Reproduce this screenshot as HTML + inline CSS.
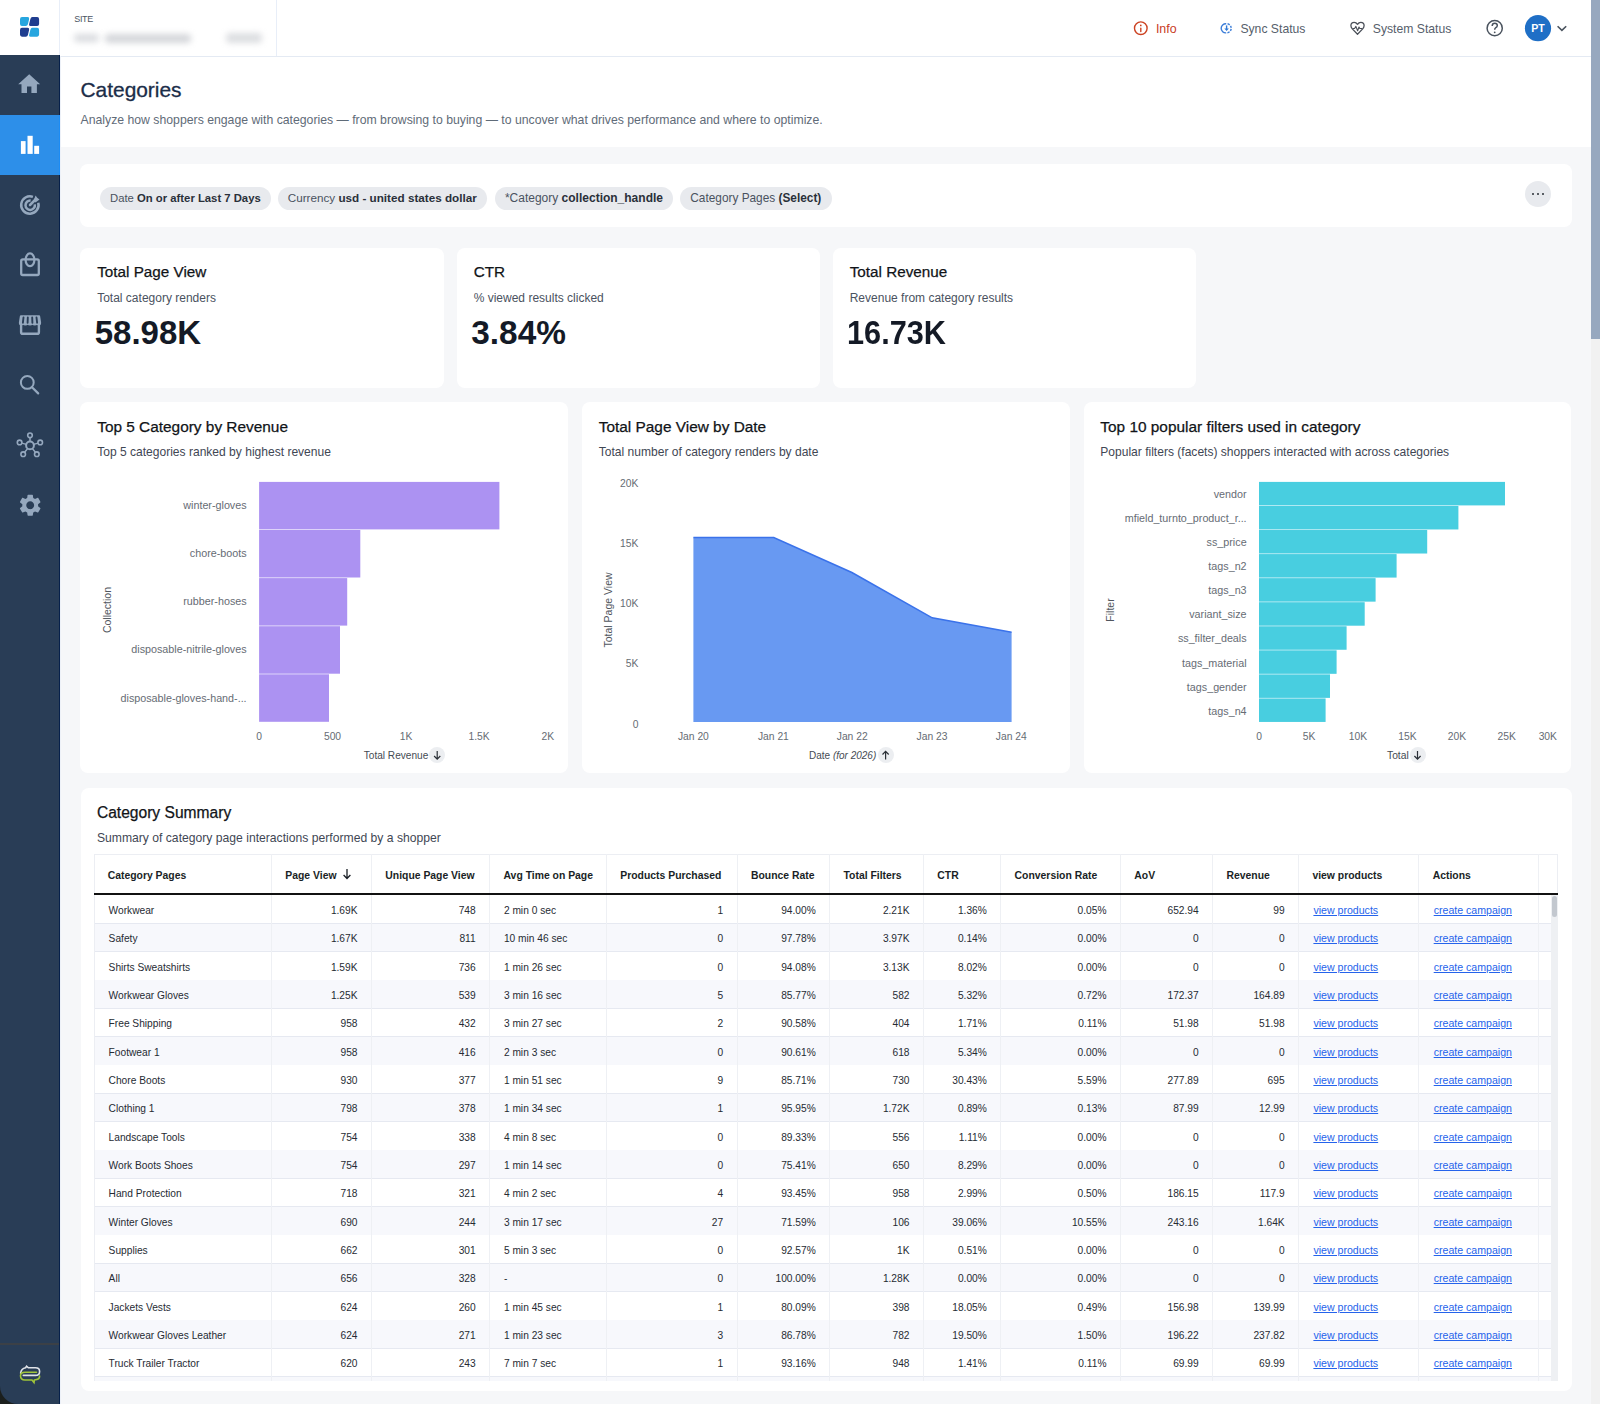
<!DOCTYPE html>
<html><head><meta charset="utf-8"><title>Categories</title>
<style>
*{box-sizing:border-box;margin:0;padding:0}
html,body{width:1600px;height:1404px;overflow:hidden}
body{font-family:"Liberation Sans",sans-serif;background:#f6f7f9;position:relative;color:#1f2937}
.abs{position:absolute}
.card{position:absolute;background:#fff;border-radius:8px}
.t{position:absolute;white-space:nowrap;line-height:1}
svg{position:absolute;overflow:visible}
</style></head><body>

<div class="abs" style="left:0px;top:0px;width:1591px;height:147px;background:#fff;"></div>
<div class="abs" style="left:60px;top:56px;width:1531px;height:1px;background:#e4eaf3;"></div>
<div class="abs" style="left:59px;top:0px;width:1px;height:56px;background:#e8eef8;"></div>
<div class="abs" style="left:276px;top:0px;width:1px;height:56px;background:#e8eef8;"></div>
<div class="t" style="left:74.3px;top:15px;font-size:9px;color:#4b5563;letter-spacing:-0.35px">SITE</div>
<div class="abs" style="left:74px;top:34px;width:25px;height:8px;background:#d9dbdf;border-radius:4px;filter:blur(3px)"></div>
<div class="abs" style="left:105px;top:33.5px;width:86px;height:9px;background:#d4d6da;border-radius:4px;filter:blur(3.2px)"></div>
<div class="abs" style="left:226px;top:33px;width:36px;height:10px;background:#dcdee1;border-radius:4px;filter:blur(3.2px)"></div>
<svg style="left:20.1px;top:17.2px" width="20" height="20" viewBox="0 0 20 20" transform="scale(1,1.04)">
<path d="M2 0.5H7.6Q9.6 0.5 9.1 2.5L7.9 7.3Q7.5 9 5.8 9H2Q0 9 0 7V2.5Q0 0.5 2 0.5Z" fill="#27a6df"/>
<path d="M12.4 0.5H17.2Q19.1 0.5 19.1 2.5V7Q19.1 9 17.1 9H10.4Q8.6 9 9.1 7.3L10.3 2.5Q10.8 0.5 12.4 0.5Z" fill="#1f3d8f"/>
<path d="M2 10.8H7.6Q9.6 10.8 9.1 12.8L7.9 17.6Q7.5 19.3 5.8 19.3H2Q0 19.3 0 17.3V12.8Q0 10.8 2 10.8Z" fill="#1f3d8f"/>
<path d="M12.4 10.8H17.2Q19.1 10.8 19.1 12.8V17.3Q19.1 19.3 17.1 19.3H10.4Q8.6 19.3 9.1 17.6L10.3 12.8Q10.8 10.8 12.4 10.8Z" fill="#27a6df"/>
</svg>
<div class="abs" style="left:0px;top:1370px;width:30px;height:34px;background:#1b1f1d;"></div>
<div class="abs" style="left:0px;top:55px;width:60px;height:1349px;background:#293d56;border-bottom-left-radius:18px"></div>
<div class="abs" style="left:59px;top:55px;width:1px;height:1349px;background:#06204a;"></div>
<div class="abs" style="left:0px;top:115px;width:60px;height:60px;background:#2d8fe9;"></div>
<div class="abs" style="left:59px;top:115px;width:1px;height:60px;background:#1c8cf5;"></div>
<div class="abs" style="left:60px;top:56px;width:1px;height:1348px;background:#edf1f8;"></div>
<div class="abs" style="left:0px;top:1343px;width:59px;height:2px;background:#3b4046;"></div>
<svg style="left:16.2px;top:71.3px" width="26.4" height="26.4" viewBox="0 0 24 24"><path d="M10 20v-6h4v6h5v-8h3L12 3 2 12h3v8z" fill="#95a8be"/></svg>
<svg style="left:0;top:0" width="60" height="200"><rect x="20.9" y="141.1" width="4.7" height="12.8" fill="#fff"/><rect x="27.5" y="135.8" width="5.2" height="18.1" fill="#fff"/><rect x="34.2" y="145.8" width="4.9" height="8.1" fill="#fff"/></svg>
<svg style="left:0;top:0" width="60" height="600">
<path d="M38.3 202.75 A8.7 8.7 0 1 1 32.9 196.8" fill="none" stroke="#95a8be" stroke-width="2.5"/>
<path d="M34.83 204.38 A4.7 4.7 0 1 1 30.61 200.52" fill="none" stroke="#95a8be" stroke-width="2.5"/>
<line x1="30" y1="205" x2="36" y2="199" stroke="#95a8be" stroke-width="2.5" stroke-linecap="round"/>
<path d="M33.6 200.6 L35.6 195.5 L37.2 197.7 L39.5 199.4 L35.5 202.5Z" fill="#95a8be"/>
</svg>
<svg style="left:0;top:0" width="60" height="600">
<rect x="21.2" y="259.4" width="17.6" height="15.6" rx="1.6" fill="none" stroke="#95a8be" stroke-width="2.3"/>
<ellipse cx="30" cy="259.8" rx="4.4" ry="6.4" fill="none" stroke="#95a8be" stroke-width="2.2"/>
</svg>
<svg style="left:0;top:0" width="60" height="600">
<rect x="21.1" y="323.6" width="17.8" height="10.2" rx="1.6" fill="none" stroke="#95a8be" stroke-width="2.4"/>
<path d="M20.8 315.3 H39.2 Q39.9 315.3 40.1 316 L41.1 322.3 Q41.3 325.6 39 325.6 Q37.4 325.6 37.1 324.2 Q36.7 325.6 34.8 325.6 Q32.8 325.6 32.4 324.2 Q32 325.6 30 325.6 Q28 325.6 27.7 324.2 Q27.3 325.6 25.3 325.6 Q23.4 325.6 23 324.2 Q22.6 325.6 21 325.6 Q18.7 325.6 18.9 322.3 L19.9 316 Q20.1 315.3 20.8 315.3Z" fill="#95a8be"/>
<path d="M23.5 317.5 L22.9 322.7 M27.8 317.5 L27.6 322.7 M32.2 317.5 L32.4 322.7 M36.5 317.5 L37.1 322.7" stroke="#293d56" stroke-width="1.9" stroke-linecap="round"/>
</svg>
<svg style="left:0;top:0" width="60" height="600">
<circle cx="27.3" cy="382.4" r="6.4" fill="none" stroke="#95a8be" stroke-width="2"/>
<line x1="32" y1="387.2" x2="38.2" y2="393.4" stroke="#95a8be" stroke-width="2.2" stroke-linecap="round"/>
</svg>
<svg style="left:0;top:0" width="60" height="600" fill="none" stroke="#95a8be">
<circle cx="30" cy="445.4" r="3.9" stroke-width="2"/>
<circle cx="30" cy="435.3" r="2.3" stroke-width="1.6"/>
<circle cx="19.6" cy="442.4" r="2.3" stroke-width="1.6"/>
<circle cx="40.2" cy="442.4" r="2.3" stroke-width="1.6"/>
<circle cx="23.2" cy="454.2" r="2.3" stroke-width="1.6"/>
<circle cx="36.8" cy="454.2" r="2.3" stroke-width="1.6"/>
<path d="M30 437.6V441.5 M21.9 443.1L26.2 444.4 M37.9 443.1L33.8 444.4 M24.6 452.3L27.6 448.6 M35.4 452.3L32.4 448.6" stroke-width="1.5"/>
</svg>
<svg style="left:16.8px;top:492px" width="26.4" height="26.4" viewBox="0 0 24 24"><path fill="#95a8be" d="M19.14 12.94c.04-.3.06-.61.06-.94 0-.32-.02-.64-.07-.94l2.03-1.58c.18-.14.23-.41.12-.61l-1.92-3.32c-.12-.22-.37-.29-.59-.22l-2.39.96c-.5-.38-1.03-.7-1.62-.94l-.36-2.54c-.04-.24-.24-.41-.48-.41h-3.84c-.24 0-.43.17-.47.41l-.36 2.54c-.59.24-1.130.57-1.62.94l-2.39-.96c-.22-.08-.47 0-.59.22L2.74 8.87c-.12.21-.08.47.12.61l2.03 1.58c-.05.3-.09.63-.09.94s.02.64.07.94l-2.03 1.58c-.18.14-.23.41-.12.61l1.92 3.32c.12.22.37.29.59.22l2.39-.96c.5.38 1.03.7 1.62.94l.36 2.54c.05.24.24.41.48.41h3.84c.24 0 .44-.17.47-.41l.36-2.54c.59-.24 1.13-.56 1.62-.94l2.39.96c.22.08.47 0 .59-.22l1.92-3.32c.12-.22.07-.47-.12-.61l-2.01-1.58zM12 15.6c-1.98 0-3.6-1.620-3.6-3.6s1.62-3.6 3.6-3.6 3.6 1.62 3.6 3.6-1.62 3.6-3.6 3.6z"/></svg>
<svg style="left:0;top:0" width="60" height="1404" fill="none" stroke-width="1.6" stroke-linecap="round">
<path d="M20.6 1373.2 Q21.2 1368.6 25.6 1367.8 L26.6 1366.3 L28.4 1367.8 H35.5 Q39.6 1367.8 39.6 1371.4 Q39.6 1375.4 35.5 1375.4 H23.3" stroke="#dfe3e8"/>
<path d="M36.5 1372.2 H25 Q20.5 1372.2 20.5 1375.8 Q20.5 1380 25 1380 H32 L34 1382.6 L34.4 1380 Q39.8 1379.6 39.6 1376" stroke="#9fc43a"/>
</svg>
<svg style="left:0;top:0" width="1600" height="60" fill="none">
<circle cx="1140.8" cy="28.2" r="6.3" stroke="#cc4222" stroke-width="1.4"/>
<line x1="1140.8" y1="28.1" x2="1140.8" y2="31.6" stroke="#cc4222" stroke-width="1.4" stroke-linecap="round"/>
<circle cx="1140.8" cy="25.4" r="0.85" fill="#cc4222"/>
<path d="M1226.20 23.72 A4.6 4.6 0 1 0 1226.20 32.88 M1227.56 23.80 A4.6 4.6 0 0 1 1229.68 24.88 M1230.50 25.86 A4.6 4.6 0 0 1 1231.17 27.82 M1231.16 28.94 A4.6 4.6 0 0 1 1230.41 30.87 M1229.56 31.82 A4.6 4.6 0 0 1 1227.40 32.83" stroke="#3b7dd8" stroke-width="1.4"/>
<path d="M1226.6 25.4 V29.2" stroke="#2f78d6" stroke-width="1.4"/>
<path d="M1224.3 28.4 H1228.9 L1226.6 31.1Z" fill="#2f78d6"/>
<path d="M1357.5 34.2 L1352.3 28.9 Q1350.9 27.4 1350.9 25.6 Q1350.9 22.3 1354.2 22.3 Q1356.2 22.3 1357.5 24.3 Q1358.8 22.3 1360.8 22.3 Q1364.1 22.3 1364.1 25.6 Q1364.1 27.4 1362.7 28.9 Z" stroke="#4b5059" stroke-width="1.3" stroke-linejoin="round"/>
<path d="M1352.4 28.5 H1354.6 L1355.9 26.4 L1357.6 30.8 L1359 27 L1359.8 28.5 H1362.6" stroke="#4b5059" stroke-width="1.1" stroke-linejoin="round"/>
<circle cx="1494.7" cy="28.2" r="7.6" stroke="#4a535e" stroke-width="1.5"/>
<path d="M1492.2 25.9 Q1492.2 23.2 1494.8 23.2 Q1497.3 23.2 1497.3 25.5 Q1497.3 27 1495.6 27.8 Q1494.7 28.3 1494.7 29.8" stroke="#4a535e" stroke-width="1.5"/>
<circle cx="1494.7" cy="32.3" r="0.9" fill="#4a535e"/>
<circle cx="1538" cy="28.2" r="13.1" fill="#1f6fc6"/>
<path d="M1557.6 26.2 L1561.9 30.4 L1566.2 26.2" stroke="#4a535e" stroke-width="1.6"/>
</svg>
<div class="t" style="left:1155.9px;top:23px;font-size:12.4px;color:#c9401f;">Info</div>
<div class="t" style="left:1240.4px;top:23px;font-size:12.2px;color:#56606b;">Sync Status</div>
<div class="t" style="left:1372.8px;top:23px;font-size:12.2px;color:#56606b;">System Status</div>
<div class="t" style="left:1538px;transform:translateX(-50%);top:23px;font-size:10.6px;font-weight:700;color:#ffffff;">PT</div>
<div class="t" style="left:80.5px;top:80px;font-size:20.9px;color:#1b2d48;-webkit-text-stroke:0.3px #1b2d48">Categories</div>
<div class="t" style="left:80.5px;top:114px;font-size:12.25px;color:#5f6b78;">Analyze how shoppers engage with categories — from browsing to buying — to uncover what drives performance and where to optimize.</div>
<div class="abs" style="left:1591px;top:0px;width:9px;height:1404px;background:#f1f1f1;"></div>
<div class="abs" style="left:1591px;top:0px;width:9px;height:339px;background:#97a8bf;"></div>
<div class="card" style="left:80px;top:163.5px;width:1492px;height:63.5px"></div>
<div class="abs" style="left:100px;top:186.8px;width:170.75px;height:23.4px;border-radius:12px;background:#e8eaee"></div>
<div class="t" style="left:100px;width:170.75px;top:193px;font-size:11.3px;color:#4a5260;text-align:center">Date <b style="color:#2a303a">On or after Last 7 Days</b></div>
<div class="abs" style="left:277.5px;top:186.8px;width:209.5px;height:23.4px;border-radius:12px;background:#e8eaee"></div>
<div class="t" style="left:277.5px;width:209.5px;top:192px;font-size:11.7px;color:#4a5260;text-align:center">Currency <b style="color:#2a303a">usd - united states dollar</b></div>
<div class="abs" style="left:494.5px;top:186.8px;width:178.9px;height:23.4px;border-radius:12px;background:#e8eaee"></div>
<div class="t" style="left:494.5px;width:178.9px;top:192px;font-size:12px;color:#4a5260;text-align:center">*Category <b style="color:#2a303a">collection_handle</b></div>
<div class="abs" style="left:680px;top:186.8px;width:151.6px;height:23.4px;border-radius:12px;background:#e8eaee"></div>
<div class="t" style="left:680px;width:151.6px;top:193px;font-size:11.85px;color:#4a5260;text-align:center">Category Pages <b style="color:#2a303a">(Select)</b></div>
<div class="abs" style="left:1525px;top:180.8px;width:26px;height:26px;border-radius:13px;background:#e8eaee"></div>
<div class="abs" style="left:1531.8px;top:192.6px;width:2.4px;height:2.4px;border-radius:1.2px;background:#2a2f36"></div>
<div class="abs" style="left:1536.8px;top:192.6px;width:2.4px;height:2.4px;border-radius:1.2px;background:#2a2f36"></div>
<div class="abs" style="left:1541.8px;top:192.6px;width:2.4px;height:2.4px;border-radius:1.2px;background:#2a2f36"></div>
<div class="card" style="left:80px;top:248px;width:363.5px;height:140px"></div>
<div class="t" style="left:97.2px;top:264px;font-size:15.25px;color:#111418;-webkit-text-stroke:0.25px #111418">Total Page View</div>
<div class="t" style="left:97.2px;top:292px;font-size:12px;color:#4a5260;">Total category renders</div>
<div class="t" style="left:94.75px;top:316px;font-size:33px;font-weight:700;color:#141a26;">58.98K</div>
<div class="card" style="left:456.5px;top:248px;width:363.5px;height:140px"></div>
<div class="t" style="left:473.7px;top:264px;font-size:15.25px;color:#111418;-webkit-text-stroke:0.25px #111418">CTR</div>
<div class="t" style="left:473.7px;top:292px;font-size:12px;color:#4a5260;">% viewed results clicked</div>
<div class="t" style="left:471.25px;top:316px;font-size:33.4px;font-weight:700;color:#141a26;">3.84%</div>
<div class="card" style="left:832.5px;top:248px;width:363.5px;height:140px"></div>
<div class="t" style="left:849.7px;top:264px;font-size:15.25px;color:#111418;-webkit-text-stroke:0.25px #111418">Total Revenue</div>
<div class="t" style="left:849.7px;top:292px;font-size:12px;color:#4a5260;">Revenue from category results</div>
<div class="t" style="left:846.9px;top:316px;font-size:33px;font-weight:700;color:#141a26;transform:scaleX(0.93);transform-origin:0 0">16.73K</div>
<div class="card" style="left:80px;top:401.5px;width:488px;height:371.9px"></div>
<div class="card" style="left:581.6px;top:401.5px;width:488.1px;height:371.9px"></div>
<div class="card" style="left:1083.8px;top:401.5px;width:487.5px;height:371.9px"></div>
<div class="t" style="left:97.2px;top:419px;font-size:15.4px;color:#111418;-webkit-text-stroke:0.25px #111418">Top 5 Category by Revenue</div>
<div class="t" style="left:97.2px;top:446px;font-size:12.05px;color:#3f4754;">Top 5 categories ranked by highest revenue</div>
<div class="t" style="left:598.75px;top:419px;font-size:15.4px;color:#111418;-webkit-text-stroke:0.25px #111418">Total Page View by Date</div>
<div class="t" style="left:598.75px;top:446px;font-size:12.05px;color:#3f4754;">Total number of category renders by date</div>
<div class="t" style="left:1100.3px;top:419px;font-size:15.4px;color:#111418;-webkit-text-stroke:0.25px #111418">Top 10 popular filters used in category</div>
<div class="t" style="left:1100.3px;top:446px;font-size:12.05px;color:#3f4754;">Popular filters (facets) shoppers interacted with across categories</div>
<svg style="left:0;top:0" width="1600" height="800">
<rect x="259.1" y="481.9" width="240.3" height="47.5" fill="#ac92f2"/>
<rect x="259.1" y="530" width="101.2" height="47.5" fill="#ac92f2"/>
<rect x="259.1" y="578.1" width="88.1" height="47.5" fill="#ac92f2"/>
<rect x="259.1" y="626.2" width="80.9" height="47.5" fill="#ac92f2"/>
<rect x="259.1" y="674.3" width="69.9" height="47.5" fill="#ac92f2"/>
<rect x="1259" y="481.9" width="246" height="23.5" fill="#48cee0"/>
<rect x="1259" y="505.96" width="199.4" height="23.5" fill="#48cee0"/>
<rect x="1259" y="530.02" width="168.2" height="23.5" fill="#48cee0"/>
<rect x="1259" y="554.08" width="137.6" height="23.5" fill="#48cee0"/>
<rect x="1259" y="578.14" width="116.6" height="23.5" fill="#48cee0"/>
<rect x="1259" y="602.2" width="105.7" height="23.5" fill="#48cee0"/>
<rect x="1259" y="626.26" width="87.6" height="23.5" fill="#48cee0"/>
<rect x="1259" y="650.32" width="77.6" height="23.5" fill="#48cee0"/>
<rect x="1259" y="674.38" width="71" height="23.5" fill="#48cee0"/>
<rect x="1259" y="698.44" width="66.6" height="23.5" fill="#48cee0"/>
<path d="M693.4 722 L693.4 537.5 L773.75 537.5 L851.9 572.5 L932.2 617.8 L1011.6 632.2 L1011.6 722Z" fill="#6899f2"/>
<polyline points="693.4,537.5 773.75,537.5 851.9,572.5 932.2,617.8 1011.6,632.2" fill="none" stroke="#3a72ea" stroke-width="1.5"/>
</svg>
<div class="t" style="right:1353.4px;top:500px;font-size:10.75px;color:#666c74;">winter-gloves</div>
<div class="t" style="right:1353.4px;top:548px;font-size:10.75px;color:#666c74;">chore-boots</div>
<div class="t" style="right:1353.4px;top:596px;font-size:10.75px;color:#666c74;">rubber-hoses</div>
<div class="t" style="right:1353.4px;top:644px;font-size:10.75px;color:#666c74;">disposable-nitrile-gloves</div>
<div class="t" style="right:1353.4px;top:693px;font-size:10.75px;color:#666c74;">disposable-gloves-hand-...</div>
<div class="t" style="right:353.4px;top:489px;font-size:10.75px;color:#666c74;">vendor</div>
<div class="t" style="right:353.4px;top:513px;font-size:10.75px;color:#666c74;">mfield_turnto_product_r...</div>
<div class="t" style="right:353.4px;top:537px;font-size:10.75px;color:#666c74;">ss_price</div>
<div class="t" style="right:353.4px;top:561px;font-size:10.75px;color:#666c74;">tags_n2</div>
<div class="t" style="right:353.4px;top:585px;font-size:10.75px;color:#666c74;">tags_n3</div>
<div class="t" style="right:353.4px;top:609px;font-size:10.75px;color:#666c74;">variant_size</div>
<div class="t" style="right:353.4px;top:633px;font-size:10.75px;color:#666c74;">ss_filter_deals</div>
<div class="t" style="right:353.4px;top:658px;font-size:10.75px;color:#666c74;">tags_material</div>
<div class="t" style="right:353.4px;top:682px;font-size:10.75px;color:#666c74;">tags_gender</div>
<div class="t" style="right:353.4px;top:706px;font-size:10.75px;color:#666c74;">tags_n4</div>
<div class="t" style="left:259.1px;transform:translateX(-50%);top:732px;font-size:10.3px;color:#666c74;">0</div>
<div class="t" style="left:332.5px;transform:translateX(-50%);top:732px;font-size:10.3px;color:#666c74;">500</div>
<div class="t" style="left:406px;transform:translateX(-50%);top:732px;font-size:10.3px;color:#666c74;">1K</div>
<div class="t" style="left:479px;transform:translateX(-50%);top:732px;font-size:10.3px;color:#666c74;">1.5K</div>
<div class="t" style="left:547.8px;transform:translateX(-50%);top:732px;font-size:10.3px;color:#666c74;">2K</div>
<div class="t" style="left:1259px;transform:translateX(-50%);top:732px;font-size:10.3px;color:#666c74;">0</div>
<div class="t" style="left:1309px;transform:translateX(-50%);top:732px;font-size:10.3px;color:#666c74;">5K</div>
<div class="t" style="left:1358px;transform:translateX(-50%);top:732px;font-size:10.3px;color:#666c74;">10K</div>
<div class="t" style="left:1407.5px;transform:translateX(-50%);top:732px;font-size:10.3px;color:#666c74;">15K</div>
<div class="t" style="left:1457px;transform:translateX(-50%);top:732px;font-size:10.3px;color:#666c74;">20K</div>
<div class="t" style="left:1506.6px;transform:translateX(-50%);top:732px;font-size:10.3px;color:#666c74;">25K</div>
<div class="t" style="left:1547.8px;transform:translateX(-50%);top:732px;font-size:10.3px;color:#666c74;">30K</div>
<div class="t" style="left:693.4px;transform:translateX(-50%);top:732px;font-size:10.3px;color:#666c74;">Jan 20</div>
<div class="t" style="left:773.4px;transform:translateX(-50%);top:732px;font-size:10.3px;color:#666c74;">Jan 21</div>
<div class="t" style="left:852.2px;transform:translateX(-50%);top:732px;font-size:10.3px;color:#666c74;">Jan 22</div>
<div class="t" style="left:932px;transform:translateX(-50%);top:732px;font-size:10.3px;color:#666c74;">Jan 23</div>
<div class="t" style="left:1011.3px;transform:translateX(-50%);top:732px;font-size:10.3px;color:#666c74;">Jan 24</div>
<div class="t" style="right:961.6px;top:479px;font-size:10.3px;color:#666c74;">20K</div>
<div class="t" style="right:961.6px;top:539px;font-size:10.3px;color:#666c74;">15K</div>
<div class="t" style="right:961.6px;top:599px;font-size:10.3px;color:#666c74;">10K</div>
<div class="t" style="right:961.6px;top:659px;font-size:10.3px;color:#666c74;">5K</div>
<div class="t" style="right:961.6px;top:720px;font-size:10.3px;color:#666c74;">0</div>
<div class="abs" style="left:429.2px;top:747.3px;width:16px;height:16px;border-radius:8px;background:#eceef1"></div>
<svg style="left:0;top:0" width="1600" height="800"><path d="M437.2 751 V759 M434.1 756 L437.2 759.2 L440.3 756" fill="none" stroke="#2a2f36" stroke-width="1.2"/></svg>
<div class="abs" style="left:877.6px;top:747.3px;width:16px;height:16px;border-radius:8px;background:#eceef1"></div>
<svg style="left:0;top:0" width="1600" height="800"><path d="M885.6 759.5 V751.5 M882.5 754.5 L885.6 751.3 L888.7 754.5" fill="none" stroke="#2a2f36" stroke-width="1.2"/></svg>
<div class="abs" style="left:1409.5px;top:747.3px;width:16px;height:16px;border-radius:8px;background:#eceef1"></div>
<svg style="left:0;top:0" width="1600" height="800"><path d="M1417.5 751 V759 M1414.4 756 L1417.5 759.2 L1420.6 756" fill="none" stroke="#2a2f36" stroke-width="1.2"/></svg>
<div class="t" style="left:363.75px;top:751px;font-size:10.1px;color:#454b53;">Total Revenue</div>
<div class="t" style="left:809px;top:751px;font-size:10px;color:#454b53;">Date <i>(for 2026)</i></div>
<div class="t" style="left:1387px;top:751px;font-size:10.3px;color:#454b53;">Total</div>
<div class="t" style="left:106.6px;top:610px;font-size:10.5px;color:#50565e;transform:translate(-50%,-50%) rotate(-90deg)">Collection</div>
<div class="t" style="left:608px;top:610px;font-size:10.5px;color:#50565e;transform:translate(-50%,-50%) rotate(-90deg)">Total Page View</div>
<div class="t" style="left:1109.7px;top:610px;font-size:10.5px;color:#50565e;transform:translate(-50%,-50%) rotate(-90deg)">Filter</div>
<div class="card" style="left:80.5px;top:787.5px;width:1491.5px;height:603px"></div>
<div class="t" style="left:96.9px;top:805px;font-size:15.6px;color:#111418;-webkit-text-stroke:0.25px #111418">Category Summary</div>
<div class="t" style="left:96.9px;top:832px;font-size:12.16px;color:#3f4754;">Summary of category page interactions performed by a shopper</div>
<div class="abs" style="left:93.5px;top:854px;width:1464.3px;height:527.2px;background:#fff;border:1px solid #eceef3;border-bottom:none"></div>
<div class="abs" style="left:94.5px;top:895.2px;width:1456.5px;height:28.34px;background:#fff;"></div>
<div class="abs" style="left:94.5px;top:922.94px;width:1456.5px;height:1px;background:#e6e9f1;"></div>
<div class="abs" style="left:94.5px;top:923.54px;width:1456.5px;height:28.34px;background:#f7f8fc;"></div>
<div class="abs" style="left:94.5px;top:951.28px;width:1456.5px;height:1px;background:#e6e9f1;"></div>
<div class="abs" style="left:94.5px;top:951.88px;width:1456.5px;height:28.34px;background:#fff;"></div>
<div class="abs" style="left:94.5px;top:979.62px;width:1456.5px;height:1px;background:#e6e9f1;"></div>
<div class="abs" style="left:94.5px;top:980.22px;width:1456.5px;height:28.34px;background:#f7f8fc;"></div>
<div class="abs" style="left:94.5px;top:1007.96px;width:1456.5px;height:1px;background:#e6e9f1;"></div>
<div class="abs" style="left:94.5px;top:1008.56px;width:1456.5px;height:28.34px;background:#fff;"></div>
<div class="abs" style="left:94.5px;top:1036.3px;width:1456.5px;height:1px;background:#e6e9f1;"></div>
<div class="abs" style="left:94.5px;top:1036.9px;width:1456.5px;height:28.34px;background:#f7f8fc;"></div>
<div class="abs" style="left:94.5px;top:1064.64px;width:1456.5px;height:1px;background:#e6e9f1;"></div>
<div class="abs" style="left:94.5px;top:1065.24px;width:1456.5px;height:28.34px;background:#fff;"></div>
<div class="abs" style="left:94.5px;top:1092.98px;width:1456.5px;height:1px;background:#e6e9f1;"></div>
<div class="abs" style="left:94.5px;top:1093.58px;width:1456.5px;height:28.34px;background:#f7f8fc;"></div>
<div class="abs" style="left:94.5px;top:1121.32px;width:1456.5px;height:1px;background:#e6e9f1;"></div>
<div class="abs" style="left:94.5px;top:1121.92px;width:1456.5px;height:28.34px;background:#fff;"></div>
<div class="abs" style="left:94.5px;top:1149.66px;width:1456.5px;height:1px;background:#e6e9f1;"></div>
<div class="abs" style="left:94.5px;top:1150.26px;width:1456.5px;height:28.34px;background:#f7f8fc;"></div>
<div class="abs" style="left:94.5px;top:1178px;width:1456.5px;height:1px;background:#e6e9f1;"></div>
<div class="abs" style="left:94.5px;top:1178.6px;width:1456.5px;height:28.34px;background:#fff;"></div>
<div class="abs" style="left:94.5px;top:1206.34px;width:1456.5px;height:1px;background:#e6e9f1;"></div>
<div class="abs" style="left:94.5px;top:1206.94px;width:1456.5px;height:28.34px;background:#f7f8fc;"></div>
<div class="abs" style="left:94.5px;top:1234.68px;width:1456.5px;height:1px;background:#e6e9f1;"></div>
<div class="abs" style="left:94.5px;top:1235.28px;width:1456.5px;height:28.34px;background:#fff;"></div>
<div class="abs" style="left:94.5px;top:1263.02px;width:1456.5px;height:1px;background:#e6e9f1;"></div>
<div class="abs" style="left:94.5px;top:1263.62px;width:1456.5px;height:28.34px;background:#f7f8fc;"></div>
<div class="abs" style="left:94.5px;top:1291.36px;width:1456.5px;height:1px;background:#e6e9f1;"></div>
<div class="abs" style="left:94.5px;top:1291.96px;width:1456.5px;height:28.34px;background:#fff;"></div>
<div class="abs" style="left:94.5px;top:1319.7px;width:1456.5px;height:1px;background:#e6e9f1;"></div>
<div class="abs" style="left:94.5px;top:1320.3px;width:1456.5px;height:28.34px;background:#f7f8fc;"></div>
<div class="abs" style="left:94.5px;top:1348.04px;width:1456.5px;height:1px;background:#e6e9f1;"></div>
<div class="abs" style="left:94.5px;top:1348.64px;width:1456.5px;height:28.34px;background:#fff;"></div>
<div class="abs" style="left:94.5px;top:1376.38px;width:1456.5px;height:1px;background:#e6e9f1;"></div>
<div class="abs" style="left:94.5px;top:1376.98px;width:1456.5px;height:4.22px;background:#f7f8fc;"></div>
<div class="abs" style="left:94.5px;top:1404.72px;width:1456.5px;height:1px;background:#e6e9f1;"></div>
<div class="abs" style="left:270.8px;top:854px;width:1px;height:527.2px;background:#eef0f4;"></div>
<div class="abs" style="left:370.8px;top:854px;width:1px;height:527.2px;background:#eef0f4;"></div>
<div class="abs" style="left:489px;top:854px;width:1px;height:527.2px;background:#eef0f4;"></div>
<div class="abs" style="left:605.8px;top:854px;width:1px;height:527.2px;background:#eef0f4;"></div>
<div class="abs" style="left:736.5px;top:854px;width:1px;height:527.2px;background:#eef0f4;"></div>
<div class="abs" style="left:829px;top:854px;width:1px;height:527.2px;background:#eef0f4;"></div>
<div class="abs" style="left:922.8px;top:854px;width:1px;height:527.2px;background:#eef0f4;"></div>
<div class="abs" style="left:1000.1px;top:854px;width:1px;height:527.2px;background:#eef0f4;"></div>
<div class="abs" style="left:1119.8px;top:854px;width:1px;height:527.2px;background:#eef0f4;"></div>
<div class="abs" style="left:1212px;top:854px;width:1px;height:527.2px;background:#eef0f4;"></div>
<div class="abs" style="left:1297.9px;top:854px;width:1px;height:527.2px;background:#eef0f4;"></div>
<div class="abs" style="left:1418.2px;top:854px;width:1px;height:527.2px;background:#eef0f4;"></div>
<div class="abs" style="left:1537.9px;top:854px;width:1px;height:527.2px;background:#eef0f4;"></div>
<div class="abs" style="left:94px;top:893.2px;width:1463.8px;height:2px;background:#111;"></div>
<div class="t" style="left:107.7px;top:871px;font-size:10.4px;font-weight:700;color:#1a1f26;">Category Pages</div>
<div class="t" style="left:285.3px;top:871px;font-size:10.4px;font-weight:700;color:#1a1f26;">Page View</div>
<div class="t" style="left:385.3px;top:871px;font-size:10.4px;font-weight:700;color:#1a1f26;">Unique Page View</div>
<div class="t" style="left:503.5px;top:871px;font-size:10.4px;font-weight:700;color:#1a1f26;">Avg Time on Page</div>
<div class="t" style="left:620.3px;top:871px;font-size:10.4px;font-weight:700;color:#1a1f26;">Products Purchased</div>
<div class="t" style="left:751px;top:871px;font-size:10.4px;font-weight:700;color:#1a1f26;">Bounce Rate</div>
<div class="t" style="left:843.5px;top:871px;font-size:10.4px;font-weight:700;color:#1a1f26;">Total Filters</div>
<div class="t" style="left:937.3px;top:871px;font-size:10.4px;font-weight:700;color:#1a1f26;">CTR</div>
<div class="t" style="left:1014.6px;top:871px;font-size:10.4px;font-weight:700;color:#1a1f26;">Conversion Rate</div>
<div class="t" style="left:1134.3px;top:871px;font-size:10.4px;font-weight:700;color:#1a1f26;">AoV</div>
<div class="t" style="left:1226.5px;top:871px;font-size:10.4px;font-weight:700;color:#1a1f26;">Revenue</div>
<div class="t" style="left:1312.4px;top:871px;font-size:10.4px;font-weight:700;color:#1a1f26;">view products</div>
<div class="t" style="left:1432.7px;top:871px;font-size:10.4px;font-weight:700;color:#1a1f26;">Actions</div>
<svg style="left:0;top:0" width="1600" height="900"><path d="M347 869 V878.3 M343.6 875 L347 878.5 L350.4 875" fill="none" stroke="#1a1f26" stroke-width="1.3"/></svg>
<div class="t" style="left:108.6px;top:906px;font-size:10.2px;color:#262b33;">Workwear</div>
<div class="t" style="right:1242.5px;top:906px;font-size:10.2px;color:#262b33;">1.69K</div>
<div class="t" style="right:1124.3px;top:906px;font-size:10.2px;color:#262b33;">748</div>
<div class="t" style="left:503.9px;top:906px;font-size:10.2px;color:#262b33;">2 min 0 sec</div>
<div class="t" style="right:876.8px;top:906px;font-size:10.2px;color:#262b33;">1</div>
<div class="t" style="right:784.3px;top:906px;font-size:10.2px;color:#262b33;">94.00%</div>
<div class="t" style="right:690.5px;top:906px;font-size:10.2px;color:#262b33;">2.21K</div>
<div class="t" style="right:613.2px;top:906px;font-size:10.2px;color:#262b33;">1.36%</div>
<div class="t" style="right:493.5px;top:906px;font-size:10.2px;color:#262b33;">0.05%</div>
<div class="t" style="right:401.3px;top:906px;font-size:10.2px;color:#262b33;">652.94</div>
<div class="t" style="right:315.4px;top:906px;font-size:10.2px;color:#262b33;">99</div>
<div class="t" style="left:1313.4px;top:905px;font-size:10.6px;color:#2563eb;text-decoration:underline">view products</div>
<div class="t" style="left:1433.7px;top:905px;font-size:10.6px;color:#2563eb;text-decoration:underline">create campaign</div>
<div class="t" style="left:108.6px;top:934px;font-size:10.2px;color:#262b33;">Safety</div>
<div class="t" style="right:1242.5px;top:934px;font-size:10.2px;color:#262b33;">1.67K</div>
<div class="t" style="right:1124.3px;top:934px;font-size:10.2px;color:#262b33;">811</div>
<div class="t" style="left:503.9px;top:934px;font-size:10.2px;color:#262b33;">10 min 46 sec</div>
<div class="t" style="right:876.8px;top:934px;font-size:10.2px;color:#262b33;">0</div>
<div class="t" style="right:784.3px;top:934px;font-size:10.2px;color:#262b33;">97.78%</div>
<div class="t" style="right:690.5px;top:934px;font-size:10.2px;color:#262b33;">3.97K</div>
<div class="t" style="right:613.2px;top:934px;font-size:10.2px;color:#262b33;">0.14%</div>
<div class="t" style="right:493.5px;top:934px;font-size:10.2px;color:#262b33;">0.00%</div>
<div class="t" style="right:401.3px;top:934px;font-size:10.2px;color:#262b33;">0</div>
<div class="t" style="right:315.4px;top:934px;font-size:10.2px;color:#262b33;">0</div>
<div class="t" style="left:1313.4px;top:933px;font-size:10.6px;color:#2563eb;text-decoration:underline">view products</div>
<div class="t" style="left:1433.7px;top:933px;font-size:10.6px;color:#2563eb;text-decoration:underline">create campaign</div>
<div class="t" style="left:108.6px;top:963px;font-size:10.2px;color:#262b33;">Shirts Sweatshirts</div>
<div class="t" style="right:1242.5px;top:963px;font-size:10.2px;color:#262b33;">1.59K</div>
<div class="t" style="right:1124.3px;top:963px;font-size:10.2px;color:#262b33;">736</div>
<div class="t" style="left:503.9px;top:963px;font-size:10.2px;color:#262b33;">1 min 26 sec</div>
<div class="t" style="right:876.8px;top:963px;font-size:10.2px;color:#262b33;">0</div>
<div class="t" style="right:784.3px;top:963px;font-size:10.2px;color:#262b33;">94.08%</div>
<div class="t" style="right:690.5px;top:963px;font-size:10.2px;color:#262b33;">3.13K</div>
<div class="t" style="right:613.2px;top:963px;font-size:10.2px;color:#262b33;">8.02%</div>
<div class="t" style="right:493.5px;top:963px;font-size:10.2px;color:#262b33;">0.00%</div>
<div class="t" style="right:401.3px;top:963px;font-size:10.2px;color:#262b33;">0</div>
<div class="t" style="right:315.4px;top:963px;font-size:10.2px;color:#262b33;">0</div>
<div class="t" style="left:1313.4px;top:962px;font-size:10.6px;color:#2563eb;text-decoration:underline">view products</div>
<div class="t" style="left:1433.7px;top:962px;font-size:10.6px;color:#2563eb;text-decoration:underline">create campaign</div>
<div class="t" style="left:108.6px;top:991px;font-size:10.2px;color:#262b33;">Workwear Gloves</div>
<div class="t" style="right:1242.5px;top:991px;font-size:10.2px;color:#262b33;">1.25K</div>
<div class="t" style="right:1124.3px;top:991px;font-size:10.2px;color:#262b33;">539</div>
<div class="t" style="left:503.9px;top:991px;font-size:10.2px;color:#262b33;">3 min 16 sec</div>
<div class="t" style="right:876.8px;top:991px;font-size:10.2px;color:#262b33;">5</div>
<div class="t" style="right:784.3px;top:991px;font-size:10.2px;color:#262b33;">85.77%</div>
<div class="t" style="right:690.5px;top:991px;font-size:10.2px;color:#262b33;">582</div>
<div class="t" style="right:613.2px;top:991px;font-size:10.2px;color:#262b33;">5.32%</div>
<div class="t" style="right:493.5px;top:991px;font-size:10.2px;color:#262b33;">0.72%</div>
<div class="t" style="right:401.3px;top:991px;font-size:10.2px;color:#262b33;">172.37</div>
<div class="t" style="right:315.4px;top:991px;font-size:10.2px;color:#262b33;">164.89</div>
<div class="t" style="left:1313.4px;top:990px;font-size:10.6px;color:#2563eb;text-decoration:underline">view products</div>
<div class="t" style="left:1433.7px;top:990px;font-size:10.6px;color:#2563eb;text-decoration:underline">create campaign</div>
<div class="t" style="left:108.6px;top:1019px;font-size:10.2px;color:#262b33;">Free Shipping</div>
<div class="t" style="right:1242.5px;top:1019px;font-size:10.2px;color:#262b33;">958</div>
<div class="t" style="right:1124.3px;top:1019px;font-size:10.2px;color:#262b33;">432</div>
<div class="t" style="left:503.9px;top:1019px;font-size:10.2px;color:#262b33;">3 min 27 sec</div>
<div class="t" style="right:876.8px;top:1019px;font-size:10.2px;color:#262b33;">2</div>
<div class="t" style="right:784.3px;top:1019px;font-size:10.2px;color:#262b33;">90.58%</div>
<div class="t" style="right:690.5px;top:1019px;font-size:10.2px;color:#262b33;">404</div>
<div class="t" style="right:613.2px;top:1019px;font-size:10.2px;color:#262b33;">1.71%</div>
<div class="t" style="right:493.5px;top:1019px;font-size:10.2px;color:#262b33;">0.11%</div>
<div class="t" style="right:401.3px;top:1019px;font-size:10.2px;color:#262b33;">51.98</div>
<div class="t" style="right:315.4px;top:1019px;font-size:10.2px;color:#262b33;">51.98</div>
<div class="t" style="left:1313.4px;top:1018px;font-size:10.6px;color:#2563eb;text-decoration:underline">view products</div>
<div class="t" style="left:1433.7px;top:1018px;font-size:10.6px;color:#2563eb;text-decoration:underline">create campaign</div>
<div class="t" style="left:108.6px;top:1048px;font-size:10.2px;color:#262b33;">Footwear 1</div>
<div class="t" style="right:1242.5px;top:1048px;font-size:10.2px;color:#262b33;">958</div>
<div class="t" style="right:1124.3px;top:1048px;font-size:10.2px;color:#262b33;">416</div>
<div class="t" style="left:503.9px;top:1048px;font-size:10.2px;color:#262b33;">2 min 3 sec</div>
<div class="t" style="right:876.8px;top:1048px;font-size:10.2px;color:#262b33;">0</div>
<div class="t" style="right:784.3px;top:1048px;font-size:10.2px;color:#262b33;">90.61%</div>
<div class="t" style="right:690.5px;top:1048px;font-size:10.2px;color:#262b33;">618</div>
<div class="t" style="right:613.2px;top:1048px;font-size:10.2px;color:#262b33;">5.34%</div>
<div class="t" style="right:493.5px;top:1048px;font-size:10.2px;color:#262b33;">0.00%</div>
<div class="t" style="right:401.3px;top:1048px;font-size:10.2px;color:#262b33;">0</div>
<div class="t" style="right:315.4px;top:1048px;font-size:10.2px;color:#262b33;">0</div>
<div class="t" style="left:1313.4px;top:1047px;font-size:10.6px;color:#2563eb;text-decoration:underline">view products</div>
<div class="t" style="left:1433.7px;top:1047px;font-size:10.6px;color:#2563eb;text-decoration:underline">create campaign</div>
<div class="t" style="left:108.6px;top:1076px;font-size:10.2px;color:#262b33;">Chore Boots</div>
<div class="t" style="right:1242.5px;top:1076px;font-size:10.2px;color:#262b33;">930</div>
<div class="t" style="right:1124.3px;top:1076px;font-size:10.2px;color:#262b33;">377</div>
<div class="t" style="left:503.9px;top:1076px;font-size:10.2px;color:#262b33;">1 min 51 sec</div>
<div class="t" style="right:876.8px;top:1076px;font-size:10.2px;color:#262b33;">9</div>
<div class="t" style="right:784.3px;top:1076px;font-size:10.2px;color:#262b33;">85.71%</div>
<div class="t" style="right:690.5px;top:1076px;font-size:10.2px;color:#262b33;">730</div>
<div class="t" style="right:613.2px;top:1076px;font-size:10.2px;color:#262b33;">30.43%</div>
<div class="t" style="right:493.5px;top:1076px;font-size:10.2px;color:#262b33;">5.59%</div>
<div class="t" style="right:401.3px;top:1076px;font-size:10.2px;color:#262b33;">277.89</div>
<div class="t" style="right:315.4px;top:1076px;font-size:10.2px;color:#262b33;">695</div>
<div class="t" style="left:1313.4px;top:1075px;font-size:10.6px;color:#2563eb;text-decoration:underline">view products</div>
<div class="t" style="left:1433.7px;top:1075px;font-size:10.6px;color:#2563eb;text-decoration:underline">create campaign</div>
<div class="t" style="left:108.6px;top:1104px;font-size:10.2px;color:#262b33;">Clothing 1</div>
<div class="t" style="right:1242.5px;top:1104px;font-size:10.2px;color:#262b33;">798</div>
<div class="t" style="right:1124.3px;top:1104px;font-size:10.2px;color:#262b33;">378</div>
<div class="t" style="left:503.9px;top:1104px;font-size:10.2px;color:#262b33;">1 min 34 sec</div>
<div class="t" style="right:876.8px;top:1104px;font-size:10.2px;color:#262b33;">1</div>
<div class="t" style="right:784.3px;top:1104px;font-size:10.2px;color:#262b33;">95.95%</div>
<div class="t" style="right:690.5px;top:1104px;font-size:10.2px;color:#262b33;">1.72K</div>
<div class="t" style="right:613.2px;top:1104px;font-size:10.2px;color:#262b33;">0.89%</div>
<div class="t" style="right:493.5px;top:1104px;font-size:10.2px;color:#262b33;">0.13%</div>
<div class="t" style="right:401.3px;top:1104px;font-size:10.2px;color:#262b33;">87.99</div>
<div class="t" style="right:315.4px;top:1104px;font-size:10.2px;color:#262b33;">12.99</div>
<div class="t" style="left:1313.4px;top:1103px;font-size:10.6px;color:#2563eb;text-decoration:underline">view products</div>
<div class="t" style="left:1433.7px;top:1103px;font-size:10.6px;color:#2563eb;text-decoration:underline">create campaign</div>
<div class="t" style="left:108.6px;top:1133px;font-size:10.2px;color:#262b33;">Landscape Tools</div>
<div class="t" style="right:1242.5px;top:1133px;font-size:10.2px;color:#262b33;">754</div>
<div class="t" style="right:1124.3px;top:1133px;font-size:10.2px;color:#262b33;">338</div>
<div class="t" style="left:503.9px;top:1133px;font-size:10.2px;color:#262b33;">4 min 8 sec</div>
<div class="t" style="right:876.8px;top:1133px;font-size:10.2px;color:#262b33;">0</div>
<div class="t" style="right:784.3px;top:1133px;font-size:10.2px;color:#262b33;">89.33%</div>
<div class="t" style="right:690.5px;top:1133px;font-size:10.2px;color:#262b33;">556</div>
<div class="t" style="right:613.2px;top:1133px;font-size:10.2px;color:#262b33;">1.11%</div>
<div class="t" style="right:493.5px;top:1133px;font-size:10.2px;color:#262b33;">0.00%</div>
<div class="t" style="right:401.3px;top:1133px;font-size:10.2px;color:#262b33;">0</div>
<div class="t" style="right:315.4px;top:1133px;font-size:10.2px;color:#262b33;">0</div>
<div class="t" style="left:1313.4px;top:1132px;font-size:10.6px;color:#2563eb;text-decoration:underline">view products</div>
<div class="t" style="left:1433.7px;top:1132px;font-size:10.6px;color:#2563eb;text-decoration:underline">create campaign</div>
<div class="t" style="left:108.6px;top:1161px;font-size:10.2px;color:#262b33;">Work Boots Shoes</div>
<div class="t" style="right:1242.5px;top:1161px;font-size:10.2px;color:#262b33;">754</div>
<div class="t" style="right:1124.3px;top:1161px;font-size:10.2px;color:#262b33;">297</div>
<div class="t" style="left:503.9px;top:1161px;font-size:10.2px;color:#262b33;">1 min 14 sec</div>
<div class="t" style="right:876.8px;top:1161px;font-size:10.2px;color:#262b33;">0</div>
<div class="t" style="right:784.3px;top:1161px;font-size:10.2px;color:#262b33;">75.41%</div>
<div class="t" style="right:690.5px;top:1161px;font-size:10.2px;color:#262b33;">650</div>
<div class="t" style="right:613.2px;top:1161px;font-size:10.2px;color:#262b33;">8.29%</div>
<div class="t" style="right:493.5px;top:1161px;font-size:10.2px;color:#262b33;">0.00%</div>
<div class="t" style="right:401.3px;top:1161px;font-size:10.2px;color:#262b33;">0</div>
<div class="t" style="right:315.4px;top:1161px;font-size:10.2px;color:#262b33;">0</div>
<div class="t" style="left:1313.4px;top:1160px;font-size:10.6px;color:#2563eb;text-decoration:underline">view products</div>
<div class="t" style="left:1433.7px;top:1160px;font-size:10.6px;color:#2563eb;text-decoration:underline">create campaign</div>
<div class="t" style="left:108.6px;top:1189px;font-size:10.2px;color:#262b33;">Hand Protection</div>
<div class="t" style="right:1242.5px;top:1189px;font-size:10.2px;color:#262b33;">718</div>
<div class="t" style="right:1124.3px;top:1189px;font-size:10.2px;color:#262b33;">321</div>
<div class="t" style="left:503.9px;top:1189px;font-size:10.2px;color:#262b33;">4 min 2 sec</div>
<div class="t" style="right:876.8px;top:1189px;font-size:10.2px;color:#262b33;">4</div>
<div class="t" style="right:784.3px;top:1189px;font-size:10.2px;color:#262b33;">93.45%</div>
<div class="t" style="right:690.5px;top:1189px;font-size:10.2px;color:#262b33;">958</div>
<div class="t" style="right:613.2px;top:1189px;font-size:10.2px;color:#262b33;">2.99%</div>
<div class="t" style="right:493.5px;top:1189px;font-size:10.2px;color:#262b33;">0.50%</div>
<div class="t" style="right:401.3px;top:1189px;font-size:10.2px;color:#262b33;">186.15</div>
<div class="t" style="right:315.4px;top:1189px;font-size:10.2px;color:#262b33;">117.9</div>
<div class="t" style="left:1313.4px;top:1188px;font-size:10.6px;color:#2563eb;text-decoration:underline">view products</div>
<div class="t" style="left:1433.7px;top:1188px;font-size:10.6px;color:#2563eb;text-decoration:underline">create campaign</div>
<div class="t" style="left:108.6px;top:1218px;font-size:10.2px;color:#262b33;">Winter Gloves</div>
<div class="t" style="right:1242.5px;top:1218px;font-size:10.2px;color:#262b33;">690</div>
<div class="t" style="right:1124.3px;top:1218px;font-size:10.2px;color:#262b33;">244</div>
<div class="t" style="left:503.9px;top:1218px;font-size:10.2px;color:#262b33;">3 min 17 sec</div>
<div class="t" style="right:876.8px;top:1218px;font-size:10.2px;color:#262b33;">27</div>
<div class="t" style="right:784.3px;top:1218px;font-size:10.2px;color:#262b33;">71.59%</div>
<div class="t" style="right:690.5px;top:1218px;font-size:10.2px;color:#262b33;">106</div>
<div class="t" style="right:613.2px;top:1218px;font-size:10.2px;color:#262b33;">39.06%</div>
<div class="t" style="right:493.5px;top:1218px;font-size:10.2px;color:#262b33;">10.55%</div>
<div class="t" style="right:401.3px;top:1218px;font-size:10.2px;color:#262b33;">243.16</div>
<div class="t" style="right:315.4px;top:1218px;font-size:10.2px;color:#262b33;">1.64K</div>
<div class="t" style="left:1313.4px;top:1217px;font-size:10.6px;color:#2563eb;text-decoration:underline">view products</div>
<div class="t" style="left:1433.7px;top:1217px;font-size:10.6px;color:#2563eb;text-decoration:underline">create campaign</div>
<div class="t" style="left:108.6px;top:1246px;font-size:10.2px;color:#262b33;">Supplies</div>
<div class="t" style="right:1242.5px;top:1246px;font-size:10.2px;color:#262b33;">662</div>
<div class="t" style="right:1124.3px;top:1246px;font-size:10.2px;color:#262b33;">301</div>
<div class="t" style="left:503.9px;top:1246px;font-size:10.2px;color:#262b33;">5 min 3 sec</div>
<div class="t" style="right:876.8px;top:1246px;font-size:10.2px;color:#262b33;">0</div>
<div class="t" style="right:784.3px;top:1246px;font-size:10.2px;color:#262b33;">92.57%</div>
<div class="t" style="right:690.5px;top:1246px;font-size:10.2px;color:#262b33;">1K</div>
<div class="t" style="right:613.2px;top:1246px;font-size:10.2px;color:#262b33;">0.51%</div>
<div class="t" style="right:493.5px;top:1246px;font-size:10.2px;color:#262b33;">0.00%</div>
<div class="t" style="right:401.3px;top:1246px;font-size:10.2px;color:#262b33;">0</div>
<div class="t" style="right:315.4px;top:1246px;font-size:10.2px;color:#262b33;">0</div>
<div class="t" style="left:1313.4px;top:1245px;font-size:10.6px;color:#2563eb;text-decoration:underline">view products</div>
<div class="t" style="left:1433.7px;top:1245px;font-size:10.6px;color:#2563eb;text-decoration:underline">create campaign</div>
<div class="t" style="left:108.6px;top:1274px;font-size:10.2px;color:#262b33;">All</div>
<div class="t" style="right:1242.5px;top:1274px;font-size:10.2px;color:#262b33;">656</div>
<div class="t" style="right:1124.3px;top:1274px;font-size:10.2px;color:#262b33;">328</div>
<div class="t" style="left:503.9px;top:1274px;font-size:10.2px;color:#262b33;">-</div>
<div class="t" style="right:876.8px;top:1274px;font-size:10.2px;color:#262b33;">0</div>
<div class="t" style="right:784.3px;top:1274px;font-size:10.2px;color:#262b33;">100.00%</div>
<div class="t" style="right:690.5px;top:1274px;font-size:10.2px;color:#262b33;">1.28K</div>
<div class="t" style="right:613.2px;top:1274px;font-size:10.2px;color:#262b33;">0.00%</div>
<div class="t" style="right:493.5px;top:1274px;font-size:10.2px;color:#262b33;">0.00%</div>
<div class="t" style="right:401.3px;top:1274px;font-size:10.2px;color:#262b33;">0</div>
<div class="t" style="right:315.4px;top:1274px;font-size:10.2px;color:#262b33;">0</div>
<div class="t" style="left:1313.4px;top:1273px;font-size:10.6px;color:#2563eb;text-decoration:underline">view products</div>
<div class="t" style="left:1433.7px;top:1273px;font-size:10.6px;color:#2563eb;text-decoration:underline">create campaign</div>
<div class="t" style="left:108.6px;top:1303px;font-size:10.2px;color:#262b33;">Jackets Vests</div>
<div class="t" style="right:1242.5px;top:1303px;font-size:10.2px;color:#262b33;">624</div>
<div class="t" style="right:1124.3px;top:1303px;font-size:10.2px;color:#262b33;">260</div>
<div class="t" style="left:503.9px;top:1303px;font-size:10.2px;color:#262b33;">1 min 45 sec</div>
<div class="t" style="right:876.8px;top:1303px;font-size:10.2px;color:#262b33;">1</div>
<div class="t" style="right:784.3px;top:1303px;font-size:10.2px;color:#262b33;">80.09%</div>
<div class="t" style="right:690.5px;top:1303px;font-size:10.2px;color:#262b33;">398</div>
<div class="t" style="right:613.2px;top:1303px;font-size:10.2px;color:#262b33;">18.05%</div>
<div class="t" style="right:493.5px;top:1303px;font-size:10.2px;color:#262b33;">0.49%</div>
<div class="t" style="right:401.3px;top:1303px;font-size:10.2px;color:#262b33;">156.98</div>
<div class="t" style="right:315.4px;top:1303px;font-size:10.2px;color:#262b33;">139.99</div>
<div class="t" style="left:1313.4px;top:1302px;font-size:10.6px;color:#2563eb;text-decoration:underline">view products</div>
<div class="t" style="left:1433.7px;top:1302px;font-size:10.6px;color:#2563eb;text-decoration:underline">create campaign</div>
<div class="t" style="left:108.6px;top:1331px;font-size:10.2px;color:#262b33;">Workwear Gloves Leather</div>
<div class="t" style="right:1242.5px;top:1331px;font-size:10.2px;color:#262b33;">624</div>
<div class="t" style="right:1124.3px;top:1331px;font-size:10.2px;color:#262b33;">271</div>
<div class="t" style="left:503.9px;top:1331px;font-size:10.2px;color:#262b33;">1 min 23 sec</div>
<div class="t" style="right:876.8px;top:1331px;font-size:10.2px;color:#262b33;">3</div>
<div class="t" style="right:784.3px;top:1331px;font-size:10.2px;color:#262b33;">86.78%</div>
<div class="t" style="right:690.5px;top:1331px;font-size:10.2px;color:#262b33;">782</div>
<div class="t" style="right:613.2px;top:1331px;font-size:10.2px;color:#262b33;">19.50%</div>
<div class="t" style="right:493.5px;top:1331px;font-size:10.2px;color:#262b33;">1.50%</div>
<div class="t" style="right:401.3px;top:1331px;font-size:10.2px;color:#262b33;">196.22</div>
<div class="t" style="right:315.4px;top:1331px;font-size:10.2px;color:#262b33;">237.82</div>
<div class="t" style="left:1313.4px;top:1330px;font-size:10.6px;color:#2563eb;text-decoration:underline">view products</div>
<div class="t" style="left:1433.7px;top:1330px;font-size:10.6px;color:#2563eb;text-decoration:underline">create campaign</div>
<div class="t" style="left:108.6px;top:1359px;font-size:10.2px;color:#262b33;">Truck Trailer Tractor</div>
<div class="t" style="right:1242.5px;top:1359px;font-size:10.2px;color:#262b33;">620</div>
<div class="t" style="right:1124.3px;top:1359px;font-size:10.2px;color:#262b33;">243</div>
<div class="t" style="left:503.9px;top:1359px;font-size:10.2px;color:#262b33;">7 min 7 sec</div>
<div class="t" style="right:876.8px;top:1359px;font-size:10.2px;color:#262b33;">1</div>
<div class="t" style="right:784.3px;top:1359px;font-size:10.2px;color:#262b33;">93.16%</div>
<div class="t" style="right:690.5px;top:1359px;font-size:10.2px;color:#262b33;">948</div>
<div class="t" style="right:613.2px;top:1359px;font-size:10.2px;color:#262b33;">1.41%</div>
<div class="t" style="right:493.5px;top:1359px;font-size:10.2px;color:#262b33;">0.11%</div>
<div class="t" style="right:401.3px;top:1359px;font-size:10.2px;color:#262b33;">69.99</div>
<div class="t" style="right:315.4px;top:1359px;font-size:10.2px;color:#262b33;">69.99</div>
<div class="t" style="left:1313.4px;top:1358px;font-size:10.6px;color:#2563eb;text-decoration:underline">view products</div>
<div class="t" style="left:1433.7px;top:1358px;font-size:10.6px;color:#2563eb;text-decoration:underline">create campaign</div>
<div class="abs" style="left:1551px;top:895.2px;width:6.8px;height:486px;background:#eef0f3;"></div>
<div class="abs" style="left:1551.6px;top:896px;width:5.6px;height:21px;background:#c3c8cf;border-radius:3px"></div>
</body></html>
